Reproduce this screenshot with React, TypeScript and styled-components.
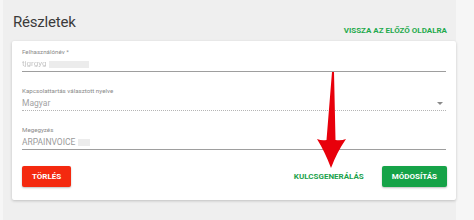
import React from 'react'
import styled, {createGlobalStyle} from "styled-components";

const GlobalStyle = createGlobalStyle`
  html, body {
    margin: 0;
    padding: 0;
    background: #f6f6f6;
    font-family: Roboto, "Liberation Sans", sans-serif;
  }
`

const Page = styled.div`
  width: 444px;
  height: 220px;
  margin-left: 3px;
  padding-left: 9px;
  background: #efefef;
  position: relative;
`

const Header = styled.div`
  display: flex;
  justify-content: space-between;
  align-items: flex-end;
  height: 41px;
  padding-right: 9px;
  box-sizing: border-box;
`

const Title = styled.h1`
  margin: 0 0 9px 1px;
  font-size: 15px;
  font-weight: 400;
  letter-spacing: -0.2px;
  color: #3b3b3b;
  line-height: 20px;
`

const TextButton = styled.button<{ $color: string }>`
  border: none;
  background: none;
  padding: 0;
  font-family: inherit;
  font-size: 8px;
  font-weight: 700;
  color: ${p => p.$color};
  text-transform: uppercase;
  cursor: pointer;
`

const BackLink = styled(TextButton)`
  margin-bottom: 6px;
`

const Card = styled.div`
  background: #fff;
  box-shadow: 0 1px 3px rgba(0, 0, 0, 0.2);
  border-radius: 2px;
  padding: 6px 10px 13px 10px;
`

const Field = styled.div`
  margin-bottom: 14px;
  position: relative;
`

const Label = styled.div`
  font-size: 6.2px;
  line-height: 10px;
  color: #8a8a8a;
`

const Value = styled.div<{ $disabled?: boolean }>`
  font-size: 8.5px;
  line-height: 14px;
  height: 14px;
  color: ${p => p.$disabled ? '#a3a3a3' : '#9a9a9a'};
  border-bottom: 1px ${p => p.$disabled ? 'dotted #b5b5b5' : 'solid #9e9e9e'};
  display: flex;
  align-items: center;
  gap: 3px;
`

const Blurred = styled.span<{ $w: number }>`
  display: inline-block;
  width: ${p => p.$w}px;
  height: 7px;
  background: #ececec;
  filter: blur(0.6px);
`

const BlurText = styled.span`
  color: #c4c4c4;
  filter: blur(0.7px);
  font-size: 8px;
`

const Caret = styled.span`
  margin-left: auto;
  margin-right: 3px;
  width: 0;
  height: 0;
  border-left: 3px solid transparent;
  border-right: 3px solid transparent;
  border-top: 3px solid #8a8a8a;
`

const Actions = styled.div`
  display: flex;
  justify-content: space-between;
  align-items: center;
  margin-top: 16px;
`

const RightActions = styled.div`
  display: flex;
  align-items: center;
  gap: 18px;
  margin-right: -1px;
`

const Button = styled.button<{ $bg: string }>`
  border: none;
  border-radius: 2px;
  background: ${p => p.$bg};
  color: #fff;
  font-family: inherit;
  font-size: 8px;
  font-weight: 700;
  height: 21px;
  padding: 0 10px;
  box-shadow: 0 1px 2px rgba(0, 0, 0, 0.25);
  cursor: pointer;
`

const Arrow = styled.svg`
  position: absolute;
  left: 312px;
  top: 72px;
  pointer-events: none;
`

export default function App() {
  return <>
    <GlobalStyle/>
    <Page>
      <Header>
        <Title>Részletek</Title>
        <BackLink $color="#1faa4d">Vissza az előző oldalra</BackLink>
      </Header>
      <Card>
        <Field>
          <Label>Felhasználónév *</Label>
          <Value>
            <BlurText>tjgrgyg</BlurText>
            <Blurred $w={40}/>
          </Value>
        </Field>
        <Field>
          <Label>Kapcsolattartás választott nyelve</Label>
          <Value $disabled>
            Magyar
            <Caret/>
          </Value>
        </Field>
        <Field>
          <Label>Megegyzés</Label>
          <Value>
            ARPAINVOICE
            <Blurred $w={12}/>
          </Value>
        </Field>
        <Actions>
          <Button $bg="#f4290f">TÖRLÉS</Button>
          <RightActions>
            <TextButton $color="#20a24c">Kulcsgenerálás</TextButton>
            <Button $bg="#16a348">MÓDOSÍTÁS</Button>
          </RightActions>
        </Actions>
      </Card>
      {/* red annotation arrow */}
      <Arrow width="32" height="100" viewBox="0 0 32 100">
        <path
          d="M17 0 L19 0 L20.5 68 Q26 69 31 67 Q22 80 16 96 Q10 80 2 67 Q7 69 11.5 68 Z"
          fill="#e8000b"
        />
      </Arrow>
    </Page>
  </>
}
